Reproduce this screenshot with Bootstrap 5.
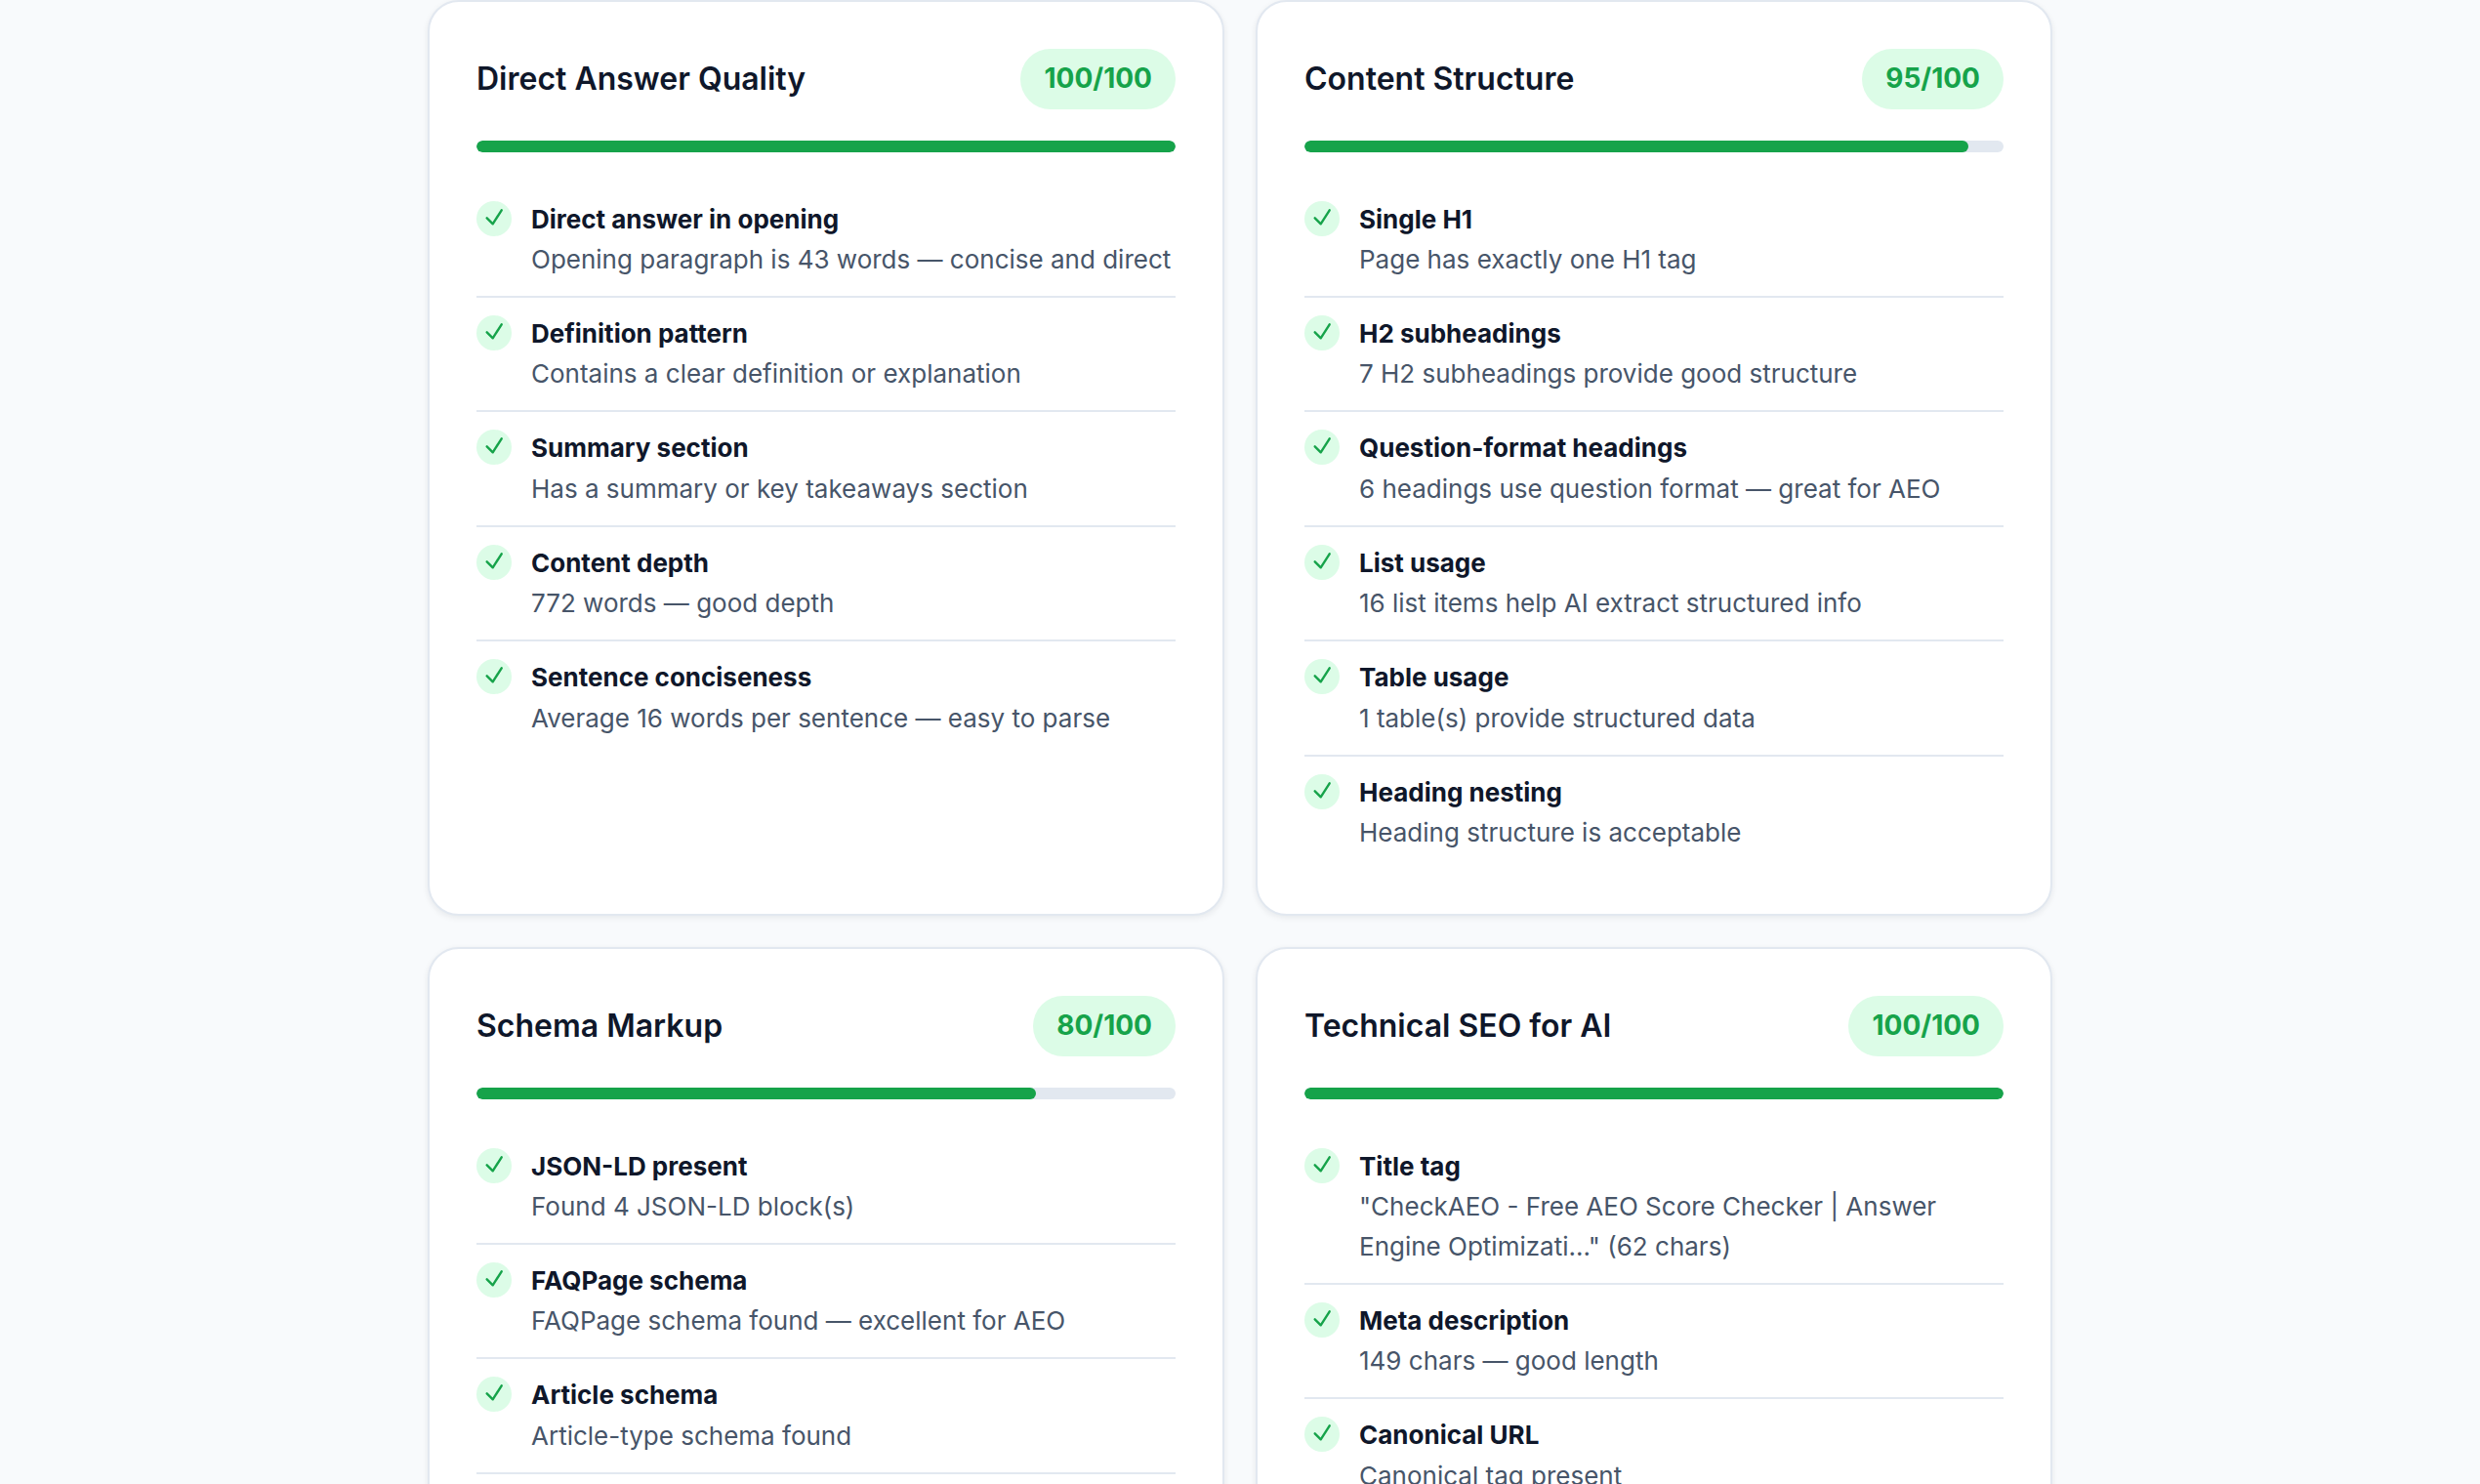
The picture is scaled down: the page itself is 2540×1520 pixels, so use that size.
<!DOCTYPE html>
<html lang="en"><head><meta charset="utf-8"><title>CheckAEO</title>
<link href="https://cdn.jsdelivr.net/npm/bootstrap@5.3.0/dist/css/bootstrap.min.css" rel="stylesheet">
<style>
html,body{height:1520px;overflow:hidden}
body{background:#f8fafc;font-family:Inter,"Liberation Sans",sans-serif;line-height:1.6;color:#0f172a}
.sheet{width:1696px}
.sheet.row{--bs-gutter-x:32px;--bs-gutter-y:0px;margin-top:0}
.sheet>*+*+*{margin-top:32px}
.pane{border:2px solid #e2e8f0;border-radius:32px;box-shadow:0 2px 6px rgba(15,23,42,.08);background:#fff;height:938px;--bs-card-bg:#fff}
.pane .card-body{padding:48px}
.pane-title{font-size:32px;font-weight:600;margin:0;color:#0f172a}
.score{background:#dcfce7;color:#16a34a;font-weight:700;font-size:28px;padding:8px 24px;border-radius:999px;line-height:45.6px}
.meter{height:12px;background:#e2e8f0;border-radius:6px;margin:32px 0}
.meter .progress-bar{background:#16a34a;border-radius:6px}
.chk{border-bottom:2px solid #e2e8f0;padding:16px 0 17px;gap:20px}
.chk:last-child{border-bottom:0}
.tick{width:36px;height:36px;flex:none;border-radius:50%;background:#dcfce7;margin-top:2px}
.chk-name{font-size:26px;font-weight:700;color:#0f172a;line-height:41.4px}
.chk-note{font-size:26px;color:#475569;line-height:41px}
</style></head><body>
<svg width="0" height="0" class="d-block"><defs><symbol id="ok" viewBox="0 0 36 36"><path d="M10.7 17.3 16.7 23.3 25.7 9.3" fill="none" stroke="#16a34a" stroke-width="2.4" stroke-linecap="round" stroke-linejoin="round"/></symbol></defs></svg>
<main class="sheet row mx-auto">

<div class="col-6"><section class="card pane"><div class="card-body">
<div class="d-flex justify-content-between align-items-center"><h3 class="pane-title">Direct Answer Quality</h3><span class="score">100/100</span></div>
<div class="progress meter"><div class="progress-bar" style="width:100%"></div></div>
<div>
<div class="chk d-flex"><svg class="tick"><use href="#ok"/></svg><div><div class="chk-name">Direct answer in opening</div><div class="chk-note">Opening paragraph is 43 words — concise and direct</div></div></div>
<div class="chk d-flex"><svg class="tick"><use href="#ok"/></svg><div><div class="chk-name">Definition pattern</div><div class="chk-note">Contains a clear definition or explanation</div></div></div>
<div class="chk d-flex"><svg class="tick"><use href="#ok"/></svg><div><div class="chk-name">Summary section</div><div class="chk-note">Has a summary or key takeaways section</div></div></div>
<div class="chk d-flex"><svg class="tick"><use href="#ok"/></svg><div><div class="chk-name">Content depth</div><div class="chk-note">772 words — good depth</div></div></div>
<div class="chk d-flex"><svg class="tick"><use href="#ok"/></svg><div><div class="chk-name">Sentence conciseness</div><div class="chk-note">Average 16 words per sentence — easy to parse</div></div></div>
</div></div></section></div>

<div class="col-6"><section class="card pane"><div class="card-body">
<div class="d-flex justify-content-between align-items-center"><h3 class="pane-title">Content Structure</h3><span class="score">95/100</span></div>
<div class="progress meter"><div class="progress-bar" style="width:95%"></div></div>
<div>
<div class="chk d-flex"><svg class="tick"><use href="#ok"/></svg><div><div class="chk-name">Single H1</div><div class="chk-note">Page has exactly one H1 tag</div></div></div>
<div class="chk d-flex"><svg class="tick"><use href="#ok"/></svg><div><div class="chk-name">H2 subheadings</div><div class="chk-note">7 H2 subheadings provide good structure</div></div></div>
<div class="chk d-flex"><svg class="tick"><use href="#ok"/></svg><div><div class="chk-name">Question-format headings</div><div class="chk-note">6 headings use question format — great for AEO</div></div></div>
<div class="chk d-flex"><svg class="tick"><use href="#ok"/></svg><div><div class="chk-name">List usage</div><div class="chk-note">16 list items help AI extract structured info</div></div></div>
<div class="chk d-flex"><svg class="tick"><use href="#ok"/></svg><div><div class="chk-name">Table usage</div><div class="chk-note">1 table(s) provide structured data</div></div></div>
<div class="chk d-flex"><svg class="tick"><use href="#ok"/></svg><div><div class="chk-name">Heading nesting</div><div class="chk-note">Heading structure is acceptable</div></div></div>
</div></div></section></div>

<div class="col-6"><section class="card pane"><div class="card-body">
<div class="d-flex justify-content-between align-items-center"><h3 class="pane-title">Schema Markup</h3><span class="score">80/100</span></div>
<div class="progress meter"><div class="progress-bar" style="width:80%"></div></div>
<div>
<div class="chk d-flex"><svg class="tick"><use href="#ok"/></svg><div><div class="chk-name">JSON-LD present</div><div class="chk-note">Found 4 JSON-LD block(s)</div></div></div>
<div class="chk d-flex"><svg class="tick"><use href="#ok"/></svg><div><div class="chk-name">FAQPage schema</div><div class="chk-note">FAQPage schema found — excellent for AEO</div></div></div>
<div class="chk d-flex"><svg class="tick"><use href="#ok"/></svg><div><div class="chk-name">Article schema</div><div class="chk-note">Article-type schema found</div></div></div>
<div class="chk d-flex"></div>
</div></div></section></div>

<div class="col-6"><section class="card pane"><div class="card-body">
<div class="d-flex justify-content-between align-items-center"><h3 class="pane-title">Technical SEO for AI</h3><span class="score">100/100</span></div>
<div class="progress meter"><div class="progress-bar" style="width:100%"></div></div>
<div>
<div class="chk d-flex"><svg class="tick"><use href="#ok"/></svg><div><div class="chk-name">Title tag</div><div class="chk-note">"CheckAEO - Free AEO Score Checker | Answer Engine Optimizati..." (62 chars)</div></div></div>
<div class="chk d-flex"><svg class="tick"><use href="#ok"/></svg><div><div class="chk-name">Meta description</div><div class="chk-note">149 chars — good length</div></div></div>
<div class="chk d-flex"><svg class="tick"><use href="#ok"/></svg><div><div class="chk-name">Canonical URL</div><div class="chk-note">Canonical tag present</div></div></div>
</div></div></section></div>

</main>
<script src="https://cdn.jsdelivr.net/npm/bootstrap@5.3.0/dist/js/bootstrap.bundle.min.js"></script>
</body></html>
